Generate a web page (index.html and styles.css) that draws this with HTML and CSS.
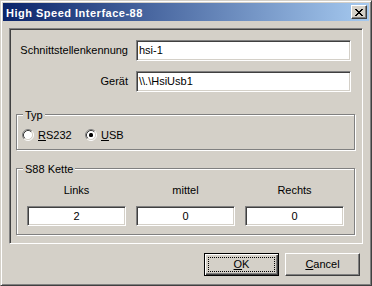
FILE: index.html
```html
<!DOCTYPE html>
<html>
<head>
<meta charset="utf-8">
<title>High Speed Interface-88</title>
<link rel="stylesheet" href="styles.css">
</head>
<body>
<div class="window">
  <div class="titlebar">
    <span class="title">High Speed Interface-88</span>
    <button class="close"><svg width="8" height="7" viewBox="0 0 8 7"><path fill="#000" d="M0 0h2v1H0zM6 0h2v1H6zM1 1h2v1H1zM5 1h2v1H5zM2 2h4v1H2zM3 3h2v1H3zM2 4h4v1H2zM1 5h2v1H1zM5 5h2v1H5zM0 6h2v1H0zM6 6h2v1H6z"/></svg></button>
  </div>
  <div class="client">
    <div class="panel">
      <div class="field-row">
        <label class="label">Schnittstellenkennung</label>
        <div class="edit">hsi-1</div>
      </div>
      <div class="field-row second">
        <label class="label">Gerät</label>
        <div class="edit">\\.\HsiUsb1</div>
      </div>
      <div class="group typ">
        <span class="legend">Typ</span>
        <div class="radios">
          <div class="radio first">
            <svg class="radio-icon" width="12" height="12" viewBox="0 0 12 12">
              <circle cx="6" cy="6" r="4.5" fill="#fff"/>
              <path d="M2.11 9.89A5.5 5.5 0 0 1 9.89 2.11" fill="none" stroke="#808080"/>
              <path d="M9.89 2.11A5.5 5.5 0 0 1 2.11 9.89" fill="none" stroke="#fff"/>
              <path d="M2.82 9.18A4.5 4.5 0 0 1 9.18 2.82" fill="none" stroke="#404040"/>
              <path d="M9.18 2.82A4.5 4.5 0 0 1 2.82 9.18" fill="none" stroke="#d4d0c8"/>
            </svg>
            <span><u>R</u>S232</span>
          </div>
          <div class="radio">
            <svg class="radio-icon" width="12" height="12" viewBox="0 0 12 12">
              <circle cx="6" cy="6" r="4.5" fill="#fff"/>
              <path d="M2.11 9.89A5.5 5.5 0 0 1 9.89 2.11" fill="none" stroke="#808080"/>
              <path d="M9.89 2.11A5.5 5.5 0 0 1 2.11 9.89" fill="none" stroke="#fff"/>
              <path d="M2.82 9.18A4.5 4.5 0 0 1 9.18 2.82" fill="none" stroke="#404040"/>
              <path d="M9.18 2.82A4.5 4.5 0 0 1 2.82 9.18" fill="none" stroke="#d4d0c8"/>
              <rect x="4" y="4" width="4" height="4" rx="1.5" fill="#000"/>
            </svg>
            <span><u>U</u>SB</span>
          </div>
        </div>
      </div>
      <div class="group s88">
        <span class="legend">S88 Kette</span>
        <div class="chain">
          <div class="chain-label">Links</div>
          <div class="chain-label">mittel</div>
          <div class="chain-label">Rechts</div>
          <div class="edit center">2</div>
          <div class="edit center">0</div>
          <div class="edit center">0</div>
        </div>
      </div>
    </div>
    <div class="buttons">
      <button class="btn default"><span class="focus"><u>O</u>K</span></button>
      <button class="btn"><span class="plain"><u>C</u>ancel</span></button>
    </div>
  </div>
</div>
</body>
</html>
```
FILE: styles.css
```css
* { box-sizing: border-box; }
html, body { margin: 0; padding: 0; background: #d4d0c8; }
body {
  font-family: "Liberation Sans", Arial, sans-serif;
  font-size: 11px;
  line-height: 13px;
  color: #000;
}
.window {
  width: 372px;
  height: 286px;
  background: #d4d0c8;
  border: 1px solid;
  border-color: #d4d0c8 #404040 #404040 #d4d0c8;
  box-shadow: inset 1px 1px #fff, inset -1px -1px #808080;
  padding: 2px;
  display: flex;
  flex-direction: column;
}
.titlebar {
  height: 18px;
  flex: none;
  display: flex;
  align-items: center;
  justify-content: space-between;
  background: linear-gradient(to right, #0a246a, #a6caf0);
  padding: 0 2px 0 3px;
}
.title {
  color: #fff;
  font-weight: bold;
  letter-spacing: 0.5px;
  padding-top: 2px;
}
.close {
  width: 16px;
  height: 14px;
  padding: 1px 0 0 0;
  margin: 0;
  background: #d4d0c8;
  border: 1px solid;
  border-color: #fff #404040 #404040 #fff;
  box-shadow: inset -1px -1px #808080;
  display: flex;
  align-items: center;
  justify-content: center;
}
.close svg { display: block; }
.client {
  flex: 1;
  padding: 7px 6px 0 6px;
  display: flex;
  flex-direction: column;
}
.panel {
  height: 216px;
  border: 1px solid;
  border-color: #808080 #fff #fff #808080;
  box-shadow: inset 1px 1px #404040, inset -1px -1px #d4d0c8;
  padding-top: 11px;
}
.field-row {
  display: flex;
  align-items: center;
  height: 21px;
}
.field-row.second { margin-top: 10px; }
.label {
  width: 126px;
  padding-right: 8px;
  text-align: right;
  white-space: nowrap;
}
.edit {
  height: 21px;
  width: 215px;
  background: #fff;
  border: 1px solid;
  border-color: #808080 #fff #fff #808080;
  box-shadow: inset 1px 1px #404040, inset -1px -1px #d4d0c8;
  padding: 0 2px;
  display: flex;
  align-items: center;
  white-space: nowrap;
}
.edit.center {
  width: auto;
  height: 20px;
  justify-content: center;
}
.group {
  position: relative;
  width: 339px;
  margin-left: 6px;
  border: 1px solid #808080;
  box-shadow: inset 1px 1px #fff, 1px 1px 0 #fff;
}
.legend {
  position: absolute;
  top: -6px;
  left: 6px;
  padding: 0 2px;
  background: #d4d0c8;
  white-space: nowrap;
}
.typ {
  margin-top: 22px;
  height: 36px;
}
.radios {
  display: flex;
  padding: 14px 0 0 5px;
}
.radio {
  display: flex;
  align-items: center;
  height: 12px;
  gap: 4px;
}
.radio.first { width: 63px; }
.radio-icon { display: block; flex: none; }
.s88 {
  margin-top: 18px;
  height: 67px;
}
.chain {
  display: grid;
  grid-template-columns: 99px 99px 99px;
  column-gap: 10px;
  row-gap: 9px;
  padding: 15px 0 0 10px;
}
.chain-label { text-align: center; }
.buttons {
  margin-top: 9px;
  display: flex;
  justify-content: flex-end;
  gap: 6px;
  padding-right: 3px;
}
.btn {
  width: 75px;
  height: 23px;
  margin: 0;
  background: #d4d0c8;
  font: inherit;
  color: #000;
  border: 1px solid;
  border-color: #fff #404040 #404040 #fff;
  box-shadow: inset -1px -1px #808080;
  padding: 0;
  display: flex;
}
.btn.default {
  border-color: #000;
  box-shadow: inset 1px 1px #fff, inset -1px -1px #404040, inset -2px -2px #808080;
  padding: 3px;
}
.focus, .plain {
  flex: 1;
  display: flex;
  align-items: center;
  justify-content: center;
}
.focus { border: 1px dotted #000; }
```
